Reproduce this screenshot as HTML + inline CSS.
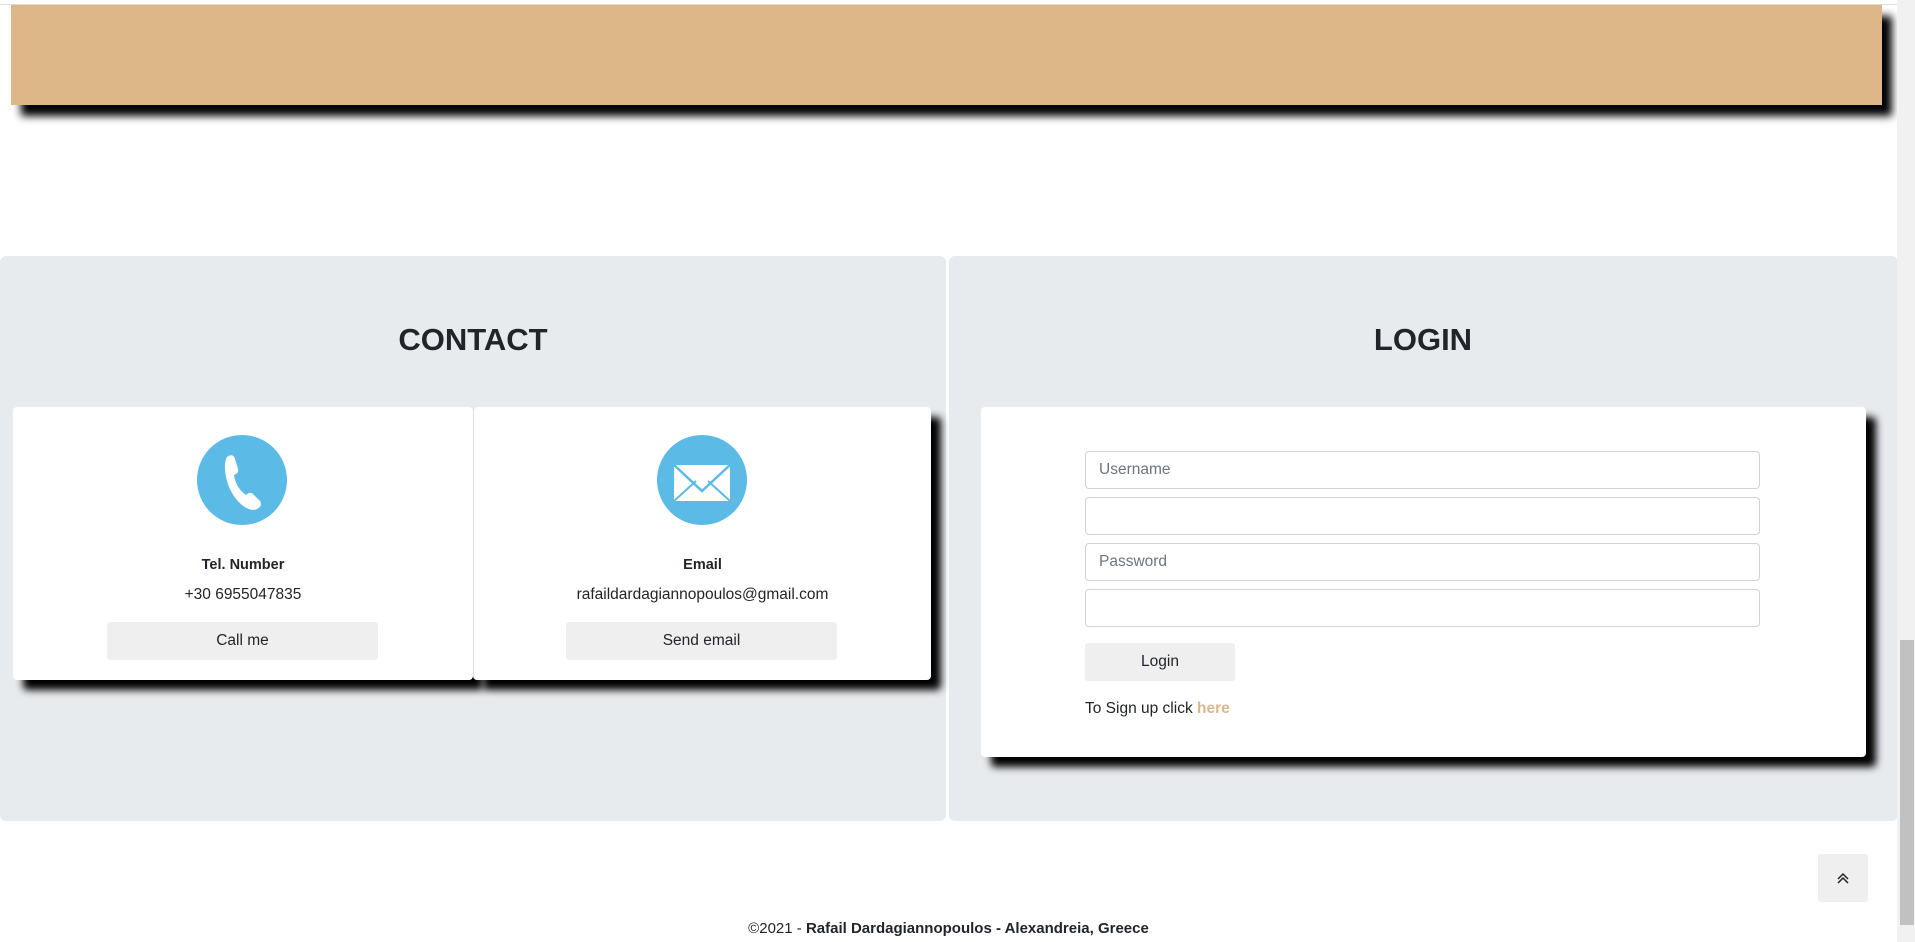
<!DOCTYPE html>
<html><head><meta charset="utf-8"><style>
*{box-sizing:border-box;margin:0;padding:0}
body{width:1915px;height:942px;position:relative;overflow:hidden;background:#fff;font-family:"Liberation Sans",sans-serif;color:#212529}
.a{position:absolute}
.tan{left:11px;top:5px;width:1871px;height:100px;background:#ddb788;box-shadow:10px 11px 8px #000}
.topline{left:0;top:4px;width:1897px;height:1px;background:#ddd}
.sec{top:256px;height:565px;background:#e8ebee;border-radius:6px}
h2{position:absolute;font-size:31px;font-weight:bold;text-align:center;top:322px}
.card{background:#fff;border-radius:4px;box-shadow:10px 10px 8px #000}
.ctr{text-align:center;width:100%;position:absolute;font-size:15.5px}
.btn{position:absolute;background:#efefef;border-radius:3px;text-align:center;font-size:15.5px;line-height:38px;color:#212529}
.inp{position:absolute;left:1085px;width:675px;height:38px;border:1px solid #ced4da;border-radius:4px;background:#fff;font-size:15.5px;color:#6c757d;padding-left:13px;line-height:36px}
.scroll{left:1897px;top:0;width:18px;height:942px;background:#f1f1f1}
.thumb{left:1900px;top:640px;width:14px;height:285px;background:#c1c1c1}
</style></head><body>
<div class="a topline"></div>
<div class="a tan"></div>
<div class="a sec" style="left:0;width:946px"></div>
<div class="a sec" style="left:949px;width:949px"></div>
<h2 style="left:0;width:946px">CONTACT</h2>
<h2 style="width:1000px;left:923px">LOGIN</h2>

<div class="a card" style="left:13px;top:407px;width:460px;height:273px">
  <svg class="a" style="left:184px;top:28px" width="90" height="90" viewBox="0 0 90 90"><circle cx="45" cy="45" r="45" fill="#5bbae6"/><path d="M30 22c4-3 7-2 8 2l3 10c1 3-1 5-4 6 1 8 5 15 12 20 2-2 5-3 7-1l7 7c2 3 1 6-3 8-8 4-20-6-26-18-6-11-8-28-4-34z" fill="#fff"/></svg>
  <div class="ctr" style="top:150px;font-weight:bold;font-size:14.5px">Tel. Number</div>
  <div class="ctr" style="top:179px">+30 6955047835</div>
  <div class="btn" style="left:94px;top:215px;width:271px">Call me</div>
</div>
<div class="a card" style="left:473px;top:407px;width:458px;height:273px;border-left:1px solid #ddd">
  <svg class="a" style="left:183px;top:28px" width="90" height="90" viewBox="0 0 90 90"><circle cx="45" cy="45" r="45" fill="#5bbae6"/><rect x="17" y="30" width="56" height="36" fill="#fff"/><path d="M17 30l28 26 28-26" fill="none" stroke="#5bbae6" stroke-width="2.5"/><path d="M17 66l22-20M73 66l-22-20" stroke="#5bbae6" stroke-width="2"/></svg>
  <div class="ctr" style="top:150px;font-weight:bold;font-size:14.5px">Email</div>
  <div class="ctr" style="top:179px">rafaildardagiannopoulos@gmail.com</div>
  <div class="btn" style="left:92px;top:215px;width:271px">Send email</div>
</div>

<div class="a card" style="left:981px;top:407px;width:885px;height:350px"></div>
<div class="inp" style="top:451px">Username</div>
<div class="inp" style="top:497px"></div>
<div class="inp" style="top:543px">Password</div>
<div class="inp" style="top:589px"></div>
<div class="btn" style="left:1085px;top:643px;width:150px">Login</div>
<div class="a" style="left:1085px;top:700px;font-size:15.5px">To Sign up click <b style="color:#ddb788">here</b></div>

<div class="btn" style="left:1818px;top:854px;width:50px;height:48px;line-height:48px;font-size:16px">
<svg width="16" height="16" viewBox="0 0 16 16" style="vertical-align:middle"><path d="M3 9l5-5 5 5M3 13l5-5 5 5" fill="none" stroke="#222" stroke-width="1.5"/></svg></div>
<div class="a" style="left:0;width:1897px;text-align:center;top:920px;font-size:15px">©2021 - <b>Rafail Dardagiannopoulos - Alexandreia, Greece</b></div>
<div class="a scroll"></div><div class="a thumb"></div>
</body></html>
